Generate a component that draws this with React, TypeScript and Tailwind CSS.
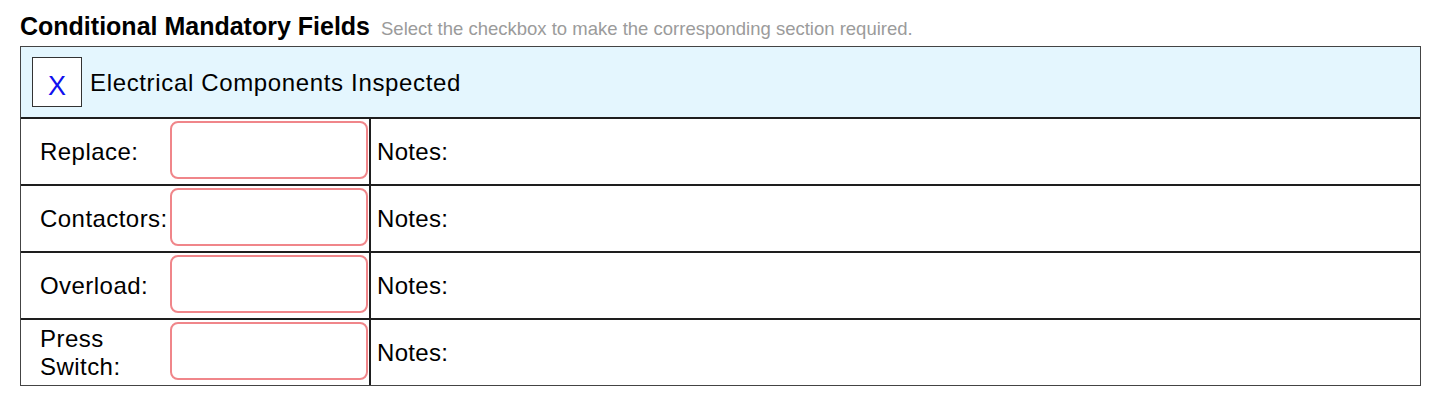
import React from "react";

const rows: { label: string }[] = [
  { label: "Replace:" },
  { label: "Contactors:" },
  { label: "Overload:" },
  { label: "Press Switch:" },
];

export default function App() {
  return (
    <div
      className="bg-white w-[1440px] h-[403px] pl-[20px] pt-[11px] text-black"
      style={{ fontFamily: '"Liberation Sans", Arial, Helvetica, sans-serif' }}
    >
      <div className="flex items-baseline h-[28px] mb-[7px]">
        <span className="text-[25px] leading-[30px] font-bold">Conditional Mandatory Fields</span>
        <span className="ml-[11px] text-[18.5px] leading-[30px] text-[#9b9b9b]">
          Select the checkbox to make the corresponding section required.
        </span>
      </div>
      <div className="w-[1401px] border border-[#444]">
        <div className="h-[70px] bg-[#e4f6fe] flex items-start pl-[11px] pt-[10px]">
          <div className="w-[50px] h-[50px] bg-white border border-[#333] flex items-center justify-center">
            <span className="text-[27px] leading-none text-[#1010ee] mt-[8px]">X</span>
          </div>
          <span className="ml-[8px] mt-[12px] text-[24px] leading-[28px] tracking-[0.65px]">
            Electrical Components Inspected
          </span>
        </div>
        {rows.map((r) => (
          <div key={r.label} className="flex h-[67px] border-t-2 border-[#1e1e1e]">
            <div className="w-[149px] pl-[19px] flex items-center text-[24px] leading-[28px] tracking-[0.45px]">
              {r.label}
            </div>
            <div className="w-[198px] h-[58px] mt-[2px] rounded-[8px] border-2 border-[#f0868a] bg-white" />
            <div className="w-[1px]" />
            <div className="flex-1 border-l-2 border-[#1e1e1e] pl-[6px] flex items-center text-[24px] leading-[28px] tracking-[0.3px]">
              Notes:
            </div>
          </div>
        ))}
      </div>
    </div>
  );
}
